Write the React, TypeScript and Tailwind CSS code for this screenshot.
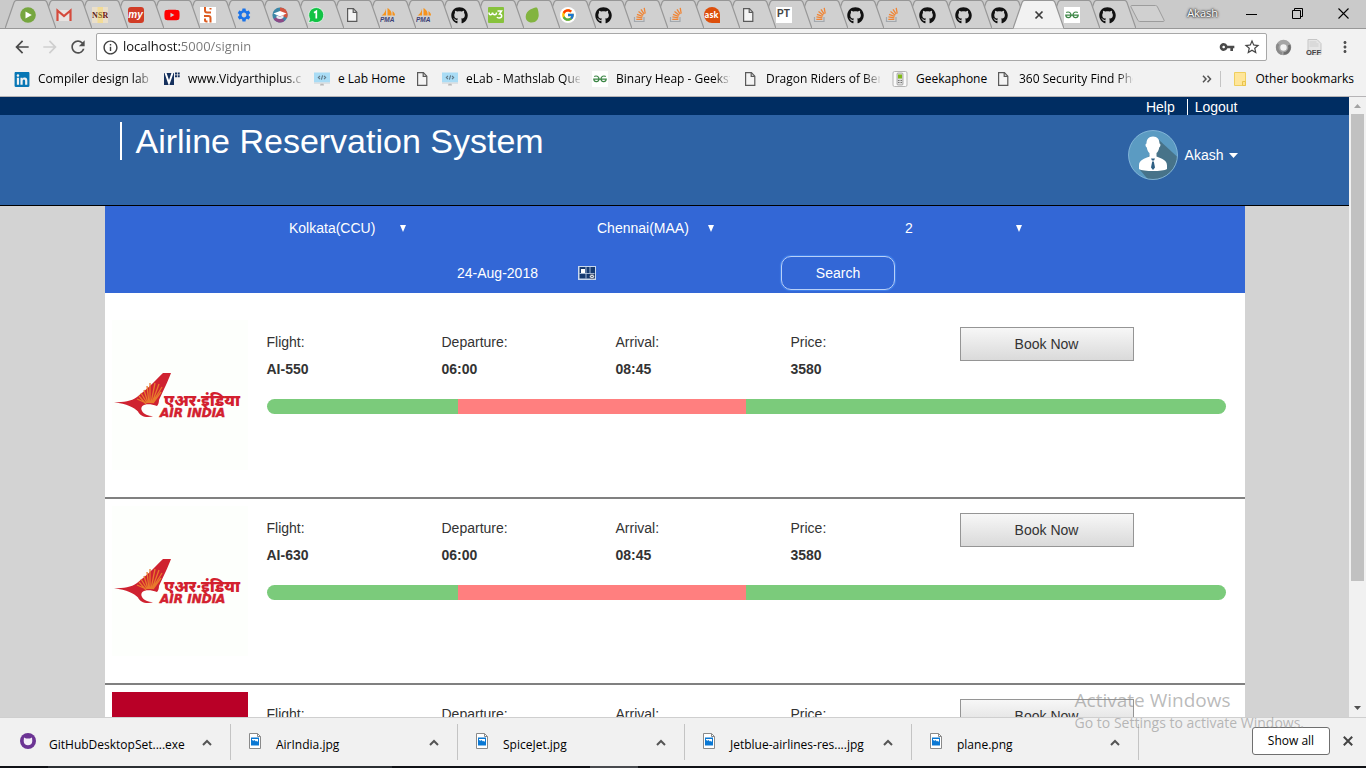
import React from 'react';
import { FaGithub, FaLinkedin, FaYoutube } from 'react-icons/fa';
import { FcGoogle } from 'react-icons/fc';
import {
  MdArrowBack,
  MdArrowForward,
  MdInfoOutline,
  MdMoreVert,
  MdRefresh,
  MdSettings,
  MdStarBorder,
  MdVpnKey,
} from 'react-icons/md';

const Page = () => (
  <svg width="16" height="16" viewBox="0 0 16 16" fill="#f4f4f4" stroke="#5a5a5a" strokeWidth="1.2">
    <path d="M3.6 1.6h5.8l3.4 3.6v9.2H3.6z" />
    <path d="M9.2 1.6v3.8h3.6" fill="none" />
  </svg>
);

const Play = () => (
  <svg width="16" height="16" viewBox="0 0 16 16">
    <circle cx="8" cy="8" r="7.8" fill="#76a63f" />
    <path d="M5.5 4.6 11.8 8l-6.3 3.4z" fill="#fff" />
  </svg>
);

const Gmail = () => (
  <svg width="16" height="16" viewBox="0 0 16 16">
    <path d="M2 3h12v11H2z" fill="#e8e4e2" />
    <path d="M1.500 14V3.500L8 9l6.500-5.500V14" fill="none" stroke="#d54b3d" strokeWidth="2.200" />
  </svg>
);

const Nsr = () => (
  <svg width="16" height="16" viewBox="0 0 16 16" fontFamily="Liberation Serif, serif" fontWeight="bold" fontSize="8">
    <rect width="16" height="16" fill="#eadfca" />
    <path d="M5.500 0h5.500v16H5.500z" fill="#f3dc96" />
    <text x="0" y="11" fill="#5a1c1c">N</text>
    <text x="6" y="11" fill="#8a6a2a">S</text>
    <text x="10.500" y="11" fill="#6b1515">R</text>
  </svg>
);

const My = () => (
  <span className="flex size-4 items-center justify-center rounded-[3px] bg-[#d13c26] pb-[2px] font-['Liberation_Sans',sans-serif] text-[10px] font-bold italic text-white">
    my
  </span>
);

const Unacademy = () => (
  <svg width="16" height="16" viewBox="0 0 16 16" fill="none" stroke="#dc5b20" strokeWidth="2">
    <rect width="16" height="16" fill="#fff" stroke="none" />
    <path d="M5 0V3.500Q5 5.500 7 5.500H11M10.500 1v1.500" />
    <path d="M4 9H8.500Q10.500 9 10.500 11V15.500M5 11.500V13Q5 14.500 6.500 14.500H7.500" />
  </svg>
);

const Scholar = () => (
  <svg width="16" height="16" viewBox="0 0 16 16">
    <circle cx="8" cy="8" r="7.600" fill="#3c86a6" />
    <path d="M8 .4a7.600 7.600 0 0 1 7 10.600L8 8z" fill="#d4553f" />
    <path d="M1.500 12a7.600 7.600 0 0 0 11 2L8 8z" fill="#8d4a86" />
    <path d="m1.500 6.500 6.500-2.500 6.500 2.500L8 9.500z" fill="#fff" />
    <path d="M4.500 8.500v2.500c2 1.500 5 1.500 7-.5V8L8 9.800z" fill="#e7eef2" />
  </svg>
);

const Whatsapp = () => (
  <svg width="16" height="16" viewBox="0 0 16 16">
    <path d="M.5 15.800 1.700 11.800A7.500 7.500 0 1 1 4.500 14.600z" fill="#12c245" stroke="#fff" strokeWidth=".7" />
    <path d="m6 5.800 2.300-1.500v7.200" fill="none" stroke="#fff" strokeWidth="1.700" />
  </svg>
);

const Pma = () => (
  <svg width="16" height="16" viewBox="0 0 16 16">
    <path d="M6 1.500v7H1.500C4 7 5.500 4.500 6 1.500zM7.500 1C11 3 12 6 11.500 8.500H7.500zM12.500 4c2 1.500 2.500 3 2.500 4.500h-2.500z" fill="#f6931d" />
    <text x="0" y="15" fontSize="6.500" fontWeight="bold" fontStyle="italic" fontFamily="Liberation Sans, sans-serif" fill="#3c4378">
      PMA
    </text>
  </svg>
);

const Github = () => <FaGithub size={17} color="#111" />;

const W3 = () => (
  <svg width="16" height="16" viewBox="0 0 16 16" fill="none" stroke="#fff" strokeWidth="1.500">
    <rect width="16" height="16" rx="1" fill="#87c23c" stroke="none" />
    <path d="M1 5.500c0 3 3 3 3.500 0 .5 3 4 3 4 0M9.500 4h4L11.500 7c3 0 3 4-.5 4-1 0-1.700-.4-2-1" />
  </svg>
);

const Leaf = () => (
  <svg width="16" height="16" viewBox="0 0 16 16">
    <path d="M12.600.5C10 .5 2 3 1.700 9.500c-.2 3.500 2.300 6 6 6 4.500 0 7-3.500 7-7.500 0-3-1-7.500-2.100-7.500z" fill="#82b440" />
  </svg>
);

const Google = () => (
  <span className="flex size-4 items-center justify-center rounded-full bg-white">
    <FcGoogle size={14} />
  </span>
);

const Stack = () => (
  <svg width="16" height="16" viewBox="0 0 16 16" fill="none">
    <path d="M2.500 10v4.500h9.500V10" stroke="#a3a8ad" strokeWidth="1.200" />
    <path d="M4.300 12.300h6M4.400 9.900l6 .9M5 7.300l5.600 2M6.500 4.600l4.800 3.600M9 2.300l3.200 4.900M12.200.9l1 5.600" stroke="#f08535" strokeWidth="1.300" />
  </svg>
);

const Ask = () => (
  <span className="flex size-4 items-center justify-center rounded-full rounded-br-none bg-[#dd4f0b] pb-px font-['Open_Sans',sans-serif] text-[8px] font-bold text-white">
    ask
  </span>
);

const Pt = () => (
  <span className="flex size-4 justify-center bg-white font-['Liberation_Sans',sans-serif] text-[10px] leading-[13px] font-bold text-[#444]">
    PT
  </span>
);

const Gfg = () => (
  <svg width="16" height="16" viewBox="0 0 16 16" fill="none" stroke="#3b8544" strokeWidth="1.200">
    <rect width="16" height="16" fill="#fff" stroke="none" />
    <path d="M2.200 5.500C4 4.500 7 5 7 8c0 3.200-5 3.500-5.200.2H14.200C14 11.500 9 11.200 9 8c0-3 3-3.500 4.800-2.500" />
  </svg>
);

const Vidyarthi = () => (
  <svg width="16" height="16" viewBox="0 0 16 16" fill="#16315d">
    <path d="M0 2h10v12H0z" />
    <path d="m1.500 2 3.500 10L8.500 2" fill="none" stroke="#fff" strokeWidth="2" />
    <path d="M11 1.500h2v2h-2zM13.700 1.500h2v2h-2zM11 4.200h2v2h-2zM13.700 4.200h2v2h-2z" />
  </svg>
);

const Elab = () => (
  <svg width="16" height="16" viewBox="0 0 16 16">
    <path d="M0 1.500h16v10H0z" fill="#a9dcf5" />
    <path d="M0 11.500h16v1.200H0z" fill="#d5d9dc" />
    <path d="M6.500 12.700h3l.5 1.800H6z" fill="#b8b8b8" />
    <path d="M6 4.800 4.300 6.500 6 8.200M10 4.800l1.700 1.700L10 8.200M8.600 4.300 7.400 8.700" fill="none" stroke="#5f7785" strokeWidth="1.100" />
  </svg>
);

const Phone = () => (
  <svg width="16" height="16" viewBox="0 0 16 16">
    <rect x="1" y=".5" width="14" height="15" rx="1.500" fill="#fafafa" stroke="#b5b5b5" />
    <rect x="5" y="2" width="6" height="12" rx="1" fill="#dedede" stroke="#909090" strokeWidth=".7" />
    <path d="M6 3.500h4v4H6z" fill="#80b918" />
    <path d="M6 9.500h4M6 11.500h4" stroke="#777" strokeDasharray="1 .5" />
  </svg>
);

const tabs: { title: string; icon: React.FC }[] = [
  { title: 'Play', icon: Play },
  { title: 'Gmail', icon: Gmail },
  { title: 'NSR', icon: Nsr },
  { title: 'my', icon: My },
  { title: 'YouTube', icon: () => <FaYoutube size={16} color="#f00" /> },
  { title: 'Courses', icon: Unacademy },
  { title: 'Settings', icon: () => <MdSettings size={16} color="#1a73e8" /> },
  { title: 'Scholar', icon: Scholar },
  { title: 'WhatsApp', icon: Whatsapp },
  { title: 'Page', icon: Page },
  { title: 'phpMyAdmin', icon: Pma },
  { title: 'phpMyAdmin', icon: Pma },
  { title: 'GitHub', icon: Github },
  { title: 'W3', icon: W3 },
  { title: 'Envato', icon: Leaf },
  { title: 'Google', icon: Google },
  { title: 'GitHub', icon: Github },
  { title: 'Stack Overflow', icon: Stack },
  { title: 'Stack Overflow', icon: Stack },
  { title: 'Ask', icon: Ask },
  { title: 'Page', icon: Page },
  { title: 'PT', icon: Pt },
  { title: 'Stack Overflow', icon: Stack },
  { title: 'GitHub', icon: Github },
  { title: 'Stack Overflow', icon: Stack },
  { title: 'GitHub', icon: Github },
  { title: 'GitHub', icon: Github },
  { title: 'GitHub', icon: Github },
  {
    title: 'Airline Reservation System',
    icon: () => (
      <svg width="16" height="16" viewBox="0 0 16 16" stroke="#3c3c3c" strokeWidth="1.700">
        <path d="m7.500 4.500 7 7M14.500 4.500l-7 7" />
      </svg>
    ),
  },
  { title: 'GeeksforGeeks', icon: Gfg },
  { title: 'GitHub', icon: Github },
];

const ACTIVE_TAB = 28;

function TabStrip() {
  return (
    <div className="flex h-[29px] items-stretch border-b border-[#989898] bg-[#cacaca] pl-[20px]">
      {tabs.map((tab, i) => {
        const active = i === ACTIVE_TAB;
        const Icon = tab.icon;
        return (
          <button
            key={i}
            type="button"
            aria-label={tab.title}
            className="-ml-[15px] grid h-[29px] w-[51px] shrink-0 grid-cols-1 grid-rows-1 items-center"
            style={{ zIndex: active ? 50 : 40 - i }}
          >
            <svg className="[grid-area:1/1]" width="51" height="29" viewBox="0 0 51 29">
              <path
                d="M0 28.500 9 2.500Q9.700 .5 11.500 .5H39.500Q41.300 .5 42 2.500L51 28.500"
                fill={active ? '#f2f2f2' : '#d0d0d0'}
                stroke="#979797"
                strokeWidth="1.200"
              />
              {!active && <path d="M0 28.500h51" stroke="#989898" />}
            </svg>
            <span className="flex w-[45px] justify-center pt-px [grid-area:1/1]">
              <Icon />
            </span>
          </button>
        );
      })}
      <button type="button" aria-label="New tab" className="-ml-[6px] flex items-center">
        <svg width="36" height="18" viewBox="0 0 36 18" fill="#d0d0d0" stroke="#9c9c9c">
          <path d="M2 .5h23.500c1 0 1.500.5 2 1.500l6.500 13c.5 1 0 1.500-1 1.500H10c-1 0-1.800-.5-2.300-1.500L1 2C.6 1 1 .5 2 .5z" />
        </svg>
      </button>
      <div className="ml-auto flex items-center">
        <span className="mr-[10px] pb-px font-['Open_Sans',sans-serif] text-[11px] text-white [text-shadow:0_0_2px_#333,0_0_2px_#333,0_0_3px_#555]">
          Akash
        </span>
        <button type="button" aria-label="Minimize" className="flex w-[46px] justify-center">
          <svg width="11" height="11" viewBox="0 0 11 11">
            <path d="M0 5.500h11" stroke="#000" />
          </svg>
        </button>
        <button type="button" aria-label="Restore" className="flex w-[46px] justify-center pb-[2px]">
          <svg width="11" height="11" viewBox="0 0 11 11" fill="none" stroke="#000">
            <path d="M.5 2.500h8v8h-8zM2.500 2.500v-2h8v8h-2" />
          </svg>
        </button>
        <button type="button" aria-label="Close" className="flex w-[46px] justify-center pb-[2px]">
          <svg width="11" height="11" viewBox="0 0 11 11" stroke="#000" strokeWidth="1.100">
            <path d="m.5.5 10 10M10.500.5l-10 10" />
          </svg>
        </button>
      </div>
    </div>
  );
}

function Toolbar() {
  return (
    <div className="flex h-[36px] items-center pr-3 pl-3">
      <button type="button" aria-label="Back" className="w-7">
        <MdArrowBack size={20} color="#4a4a4a" />
      </button>
      <button type="button" aria-label="Forward" className="w-7">
        <MdArrowForward size={20} color="#cfcfcf" />
      </button>
      <button type="button" aria-label="Reload" className="w-7">
        <MdRefresh size={20} color="#505050" />
      </button>
      <div className="flex h-[28px] flex-1 items-center rounded-[2px] border border-[#a8a8a8] bg-white pr-[5px] pl-[5px]">
        <MdInfoOutline size={17} color="#3f3f3f" />
        <input
          aria-label="Address"
          defaultValue="localhost:5000/signin"
          className="ml-1 flex-1 bg-[linear-gradient(90deg,#111_58px,#777_58px)] bg-clip-text font-['Open_Sans',sans-serif] text-[13px] text-transparent outline-none"
        />
        <button type="button" aria-label="Saved password" className="w-6">
          <MdVpnKey size={16} color="#4a4a4a" />
        </button>
        <button type="button" aria-label="Bookmark this page">
          <MdStarBorder size={18} color="#444" />
        </button>
      </div>
      <button type="button" aria-label="Sync" className="ml-2">
        <svg width="17" height="17" viewBox="0 0 17 17" fill="none">
          <circle cx="8.500" cy="8.500" r="5.500" stroke="#a5a5a5" strokeWidth="4.500" />
          <path d="M3.500 5a6 6 0 0 0 3.500 9.500" stroke="#8a8a8a" strokeWidth="2.500" />
          <path d="M14 6a6 6 0 0 1-5.500 8.500" stroke="#6e6e6e" strokeWidth="2.500" />
        </svg>
      </button>
      <button type="button" aria-label="Extension off" className="ml-[14px]">
        <svg width="16" height="17" viewBox="0 0 16 17">
          <path d="M2 .5h9l4 4v11H2z" fill="#e6e6e6" stroke="#c6c6c6" />
          <path d="M3.500 3h7M3.500 5h9M3.500 7h9" stroke="#cecece" />
          <text x="0" y="15.500" fontSize="7.500" fontWeight="bold" fontFamily="Liberation Sans, sans-serif" fill="#444">
            OFF
          </text>
        </svg>
      </button>
      <button type="button" aria-label="Menu" className="ml-[14px]">
        <MdMoreVert size={18} color="#505050" />
      </button>
    </div>
  );
}

const bookmarks: { label: string; icon: React.FC; width?: string }[] = [
  { label: 'Compiler design lab pro', icon: () => <FaLinkedin size={17} color="#0877b5" />, width: 'cut' },
  { label: 'www.Vidyarthiplus.com', icon: Vidyarthi, width: 'cut' },
  { label: 'e Lab Home', icon: Elab, width: 'w-16' },
  { label: '', icon: Page },
  { label: 'eLab - Mathslab Quest', icon: Elab, width: 'cut' },
  { label: 'Binary Heap - Geeksfor', icon: Gfg, width: 'cut' },
  { label: 'Dragon Riders of Berk', icon: Page, width: 'cut' },
  { label: 'Geekaphone', icon: Phone, width: 'w-[67px]' },
  { label: '360 Security Find Phone', icon: Page, width: 'cut' },
];

function BookmarksBar() {
  return (
    <nav className="flex h-8 items-center gap-3 border-b border-[#b6b4b6] pb-[3px] pl-[14px] font-['Open_Sans',sans-serif] text-[12px] whitespace-nowrap text-black">
      {bookmarks.map((b, i) => (
        <a key={i} href="#bookmark" aria-label={b.label || 'Page'} className="flex items-center gap-2">
          <span className="flex w-4 shrink-0 justify-center">
            <b.icon />
          </span>
          {b.label && (
            <span
              className={
                b.width === 'cut'
                  ? 'w-[114px] overflow-hidden [mask-image:linear-gradient(90deg,#000_98px,transparent_116px)]'
                  : b.width
              }
            >
              {b.label}
            </span>
          )}
        </a>
      ))}
      <button type="button" aria-label="More bookmarks" className="ml-auto">
        <svg width="10" height="8" viewBox="0 0 10 8" fill="none" stroke="#555" strokeWidth="1.500">
          <path d="m1 .8 3 3.200-3 3.200M5.500.8l3 3.200-3 3.200" />
        </svg>
      </button>
      <span className="-ml-1 h-4 w-px bg-[#c4c4c4]" />
      <a href="#other" className="mr-3 flex items-center gap-2">
        <svg width="14" height="16" viewBox="0 0 14 16">
          <path d="M1.500 1.500h11v13h-11z" fill="#ffe69a" stroke="#efcf5e" />
          <path d="M9.500 14.500v-4h3v4z" fill="#ffe18a" stroke="#e8c44c" />
        </svg>
        Other bookmarks
      </a>
    </nav>
  );
}

const Avatar = () => (
  <svg width="50" height="50" viewBox="0 0 50 50">
    <defs>
      <clipPath id="disc">
        <circle cx="25" cy="25" r="24.500" />
      </clipPath>
    </defs>
    <circle cx="25" cy="25" r="24.500" fill="#5b9bc2" />
    <g clipPath="url(#disc)">
      <path d="m31 10 24 22v22H24L12 40z" fill="#477389" />
    </g>
    <circle cx="25" cy="25" r="24.500" fill="none" stroke="#8fc0e0" strokeWidth=".8" />
    <path d="M25 6.500c4.500 0 6.500 3 6.500 7 1.300.2 1.300 3-.3 4-.5 3-1.500 4.500-2.700 5.500v3.500c5 2.500 10.500 3 10.500 9V39c-4 2.700-24 2.700-28 0v-3.500c0-6 5.500-6.500 10.500-9V23c-1.200-1-2.200-2.500-2.700-5.500-1.600-1-1.600-3.800-.3-4 0-4 2-7 6.500-7z" fill="#fff" />
    <path d="M23 28.500h4l-1 2h-2zM24.200 31.500h1.600L27 37.500l-2 2.500-2-2.500z" fill="#2e5f83" />
  </svg>
);

function Header() {
  return (
    <header className="border-b border-black bg-[#2e63a5] font-['Liberation_Sans',Arial,sans-serif] text-white">
      <div className="bg-[#002d62]">
        <div className="mx-auto flex h-[18px] max-w-[1140px] items-end justify-end pr-[7px] text-[14px] leading-4">
          <a href="#help" className="pr-3">Help</a>
          <a href="#logout" className="border-l border-white pl-[7px]">Logout</a>
        </div>
      </div>
      <div className="mx-auto flex h-[90px] max-w-[1140px] items-start justify-between pr-[7px] pl-[15px]">
        <h1 className="mt-[7px] border-l-2 border-white pl-[14px] text-[34px] leading-[38px]">
          Airline Reservation System
        </h1>
        <button type="button" className="mt-[15px] flex items-center text-[14px]">
          <Avatar />
          <span className="ml-[7px]">Akash</span>
          <svg className="ml-[5px]" width="9" height="5" viewBox="0 0 9 5">
            <path d="M0 0h9L4.500 5z" fill="#fff" />
          </svg>
        </button>
      </div>
    </header>
  );
}

function Picker({ label, value }: { label: string; value: string }) {
  return (
    <div className="grid w-[158px] grid-cols-1 items-center">
      <select
        aria-label={label}
        className="h-7 w-[130px] appearance-none bg-transparent text-white outline-none [grid-area:1/1]"
      >
        <option>{value}</option>
      </select>
      <svg className="pointer-events-none ml-[111px] [grid-area:1/1]" width="6" height="7" viewBox="0 0 6 7">
        <path d="M0 0h6L3 7z" fill="#fff" />
      </svg>
    </div>
  );
}

function SearchPanel() {
  return (
    <form className="bg-[#3367d6] pt-2 pb-[3px] pl-[3px] text-[14px] text-white">
      <div className="flex justify-center gap-[150px]">
        <Picker label="From" value="Kolkata(CCU)" />
        <Picker label="To" value="Chennai(MAA)" />
        <Picker label="Passengers" value="2" />
      </div>
      <div className="mt-[14px] flex items-center justify-center gap-[185px]">
        <div className="flex items-center">
          <input aria-label="Date" defaultValue="24-Aug-2018" className="w-[121px] bg-transparent outline-none" />
          <button type="button" aria-label="Open calendar">
            <svg width="18" height="14" viewBox="0 0 18 14">
              <rect width="18" height="14" fill="#c9d8ee" />
              <path d="M1.500 1h15.500v11.500H1.500z" fill="#163a70" />
              <path d="M3 3h4v4H3z" fill="#fff" />
              <path d="M8 1v11.500M12 1v6M1.500 7.500h15" stroke="#c3d3ea" strokeWidth=".8" />
              <circle cx="14" cy="10.500" r="2.300" fill="#e4ecf7" stroke="#556" strokeWidth=".7" />
              <circle cx="14" cy="10.500" r=".8" fill="#345" />
            </svg>
          </button>
        </div>
        <button
          type="button"
          className="h-[34px] w-[114px] rounded-[10px] border border-[#b8d0f8] shadow-[0_0_1px_1px_#4080ec]"
        >
          Search
        </button>
      </div>
    </form>
  );
}

const AirIndia = () => (
  <svg className="w-full" viewBox="0 0 136 150" role="img" aria-label="Air India">
    <rect width="136" height="150" fill="#fdfffc" />
    <path
      d="M2 82.500c10-.4 17-1 23-5.500 9-7 16-14 26-24h8c-3 8-7 16-12 27 0 3-1 5-2 6-10-4-18-1-15 5 2 3.500 6 4.500 11 5.500-8 1.500-13-.5-15-5-4-4-11-8-24-9z"
      fill="#cf2230"
    />
    <path
      d="m34 83-9-4M34 84l-7-8M35 83l-6-10M36 83l-4-13M37 83l-2-17M38 83V63M39 83l4-20M40 83l7-19M40 83l10-16M41 83l8-11"
      stroke="#e87a2c"
      strokeWidth="1.300"
      fill="none"
    />
    <text x="52" y="86" fontSize="16" fontWeight="900" fontStyle="italic" fontFamily="Noto Sans, sans-serif" fill="#d3202e">
      एअर·इंडिया
    </text>
    <text x="48" y="97" fontSize="12" fontWeight="bold" fontStyle="italic" fontFamily="DejaVu Sans, sans-serif" fill="#d3202e" stroke="#d3202e" strokeWidth=".5">
      AIR INDIA
    </text>
  </svg>
);

const SpiceJet = () => (
  <svg className="w-full" viewBox="0 0 136 150" role="img" aria-label="SpiceJet">
    <rect width="136" height="150" fill="#b90027" />
  </svg>
);

const Fact = ({ name, value }: { name: string; value: string }) => (
  <div className="pt-[2px]">
    <dt>{name}</dt>
    <dd className="font-bold">{value}</dd>
  </div>
);

const flights = [
  { no: 'AI-550', logo: AirIndia },
  { no: 'AI-630', logo: AirIndia },
  { no: 'SG-611', logo: SpiceJet },
];

function FlightRow({ no, logo: Logo }: { no: string; logo: React.FC }) {
  return (
    <li className="flex border-b-2 border-[#808080] pt-[7px] pr-[19px] pb-[27px] pl-[7px]">
      <div className="mr-[19px] h-[150px] w-[136px] shrink-0">
        <Logo />
      </div>
      <div className="flex-1 pt-[7px]">
        <dl className="grid grid-cols-[175fr_174fr_175fr_169fr_174fr_92fr] text-[14px] leading-[27px] text-[#333]">
          <Fact name="Flight:" value={no} />
          <Fact name="Departure:" value="06:00" />
          <Fact name="Arrival:" value="08:45" />
          <Fact name="Price:" value="3580" />
          <button
            type="button"
            className="h-[34px] border border-[#959595] bg-linear-to-b from-[#f7f7f7] to-[#dadada]"
          >
            Book Now
          </button>
        </dl>
        <div className="mt-4 flex h-[15px] overflow-hidden rounded-full bg-[#7bcb7b]">
          <div className="ml-[20%] w-[30%] bg-[#ff7f7f]" />
        </div>
      </div>
    </li>
  );
}

function Scrollbar() {
  return (
    <div className="flex w-[17px] shrink-0 flex-col items-center bg-[#f1f1f1]">
      <svg className="shrink-0" width="17" height="17" viewBox="0 0 17 17">
        <path d="M5 11h7L8.500 7z" fill="#a3a3a3" />
      </svg>
      <div className="h-[467px] w-[13px] bg-[#c1c1c1]" />
      <svg className="mt-auto shrink-0" width="17" height="17" viewBox="0 0 17 17">
        <path d="M5 6h7l-3.500 4z" fill="#505050" />
      </svg>
    </div>
  );
}

const ImageFile = () => (
  <svg width="16" height="16" viewBox="0 0 16 16">
    <path d="M2.500.5h8l3 3v12h-11z" fill="#fff" stroke="#8a8a8a" />
    <path d="M10.500.5v3h3" fill="none" stroke="#8a8a8a" />
    <path d="M4 4.500h8v8H4z" fill="#0a78d4" />
    <path d="M5 6h6v3L9.800 7.800 9 8.500 7.500 7l-1 .8L5 7z" fill="#fff" />
  </svg>
);

const Installer = () => (
  <svg width="16" height="16" viewBox="0 0 16 16">
    <circle cx="8" cy="8" r="8" fill="#6c3494" />
    <path d="M4 4.500 6 5.500h4l2-1 .3 3.500c0 3-2 4.200-4.300 4.200S3.700 11 3.700 8z" fill="#f4eef8" />
  </svg>
);

const downloads = [
  { name: 'GitHubDesktopSet....exe', icon: Installer },
  { name: 'AirIndia.jpg', icon: ImageFile },
  { name: 'SpiceJet.jpg', icon: ImageFile },
  { name: 'Jetblue-airlines-res....jpg', icon: ImageFile },
  { name: 'plane.png', icon: ImageFile },
];

function DownloadsBar() {
  return (
    <footer className="flex h-[49px] shrink-0 items-center border-t border-[#cfcfcf] bg-[#f1f1f1] pl-1 font-['Open_Sans',sans-serif] text-[12px] text-black">
      {downloads.map((d) => (
        <div key={d.name} className="flex h-9 w-[227px] shrink-0 items-center border-r border-[#c4c4c4] pl-4">
          <span className="pb-[2px]">
            <d.icon />
          </span>
          <span className="ml-[13px] pt-[5px]">{d.name}</span>
          <button type="button" aria-label={`Options for ${d.name}`} className="mr-[18px] ml-auto">
            <svg width="10" height="7" viewBox="0 0 10 7" fill="none" stroke="#555" strokeWidth="2">
              <path d="m1 6 4-4 4 4" />
            </svg>
          </button>
        </div>
      ))}
      <button type="button" className="mb-[2px] ml-auto h-[28px] w-[78px] rounded-[3px] border border-[#6f6f6f] bg-white">
        Show all
      </button>
      <button type="button" aria-label="Close downloads" className="mb-[2px] mr-[13px] ml-[13px]">
        <svg width="10" height="10" viewBox="0 0 10 10" stroke="#444" strokeWidth="2">
          <path d="m.8.8 8.400 8.400M9.200.8.8 9.200" />
        </svg>
      </button>
    </footer>
  );
}

export default function App() {
  return (
    <div className="relative flex h-screen flex-col overflow-hidden bg-[#f2f2f2]">
      <TabStrip />
      <Toolbar />
      <BookmarksBar />
      <div className="flex min-h-0 flex-1">
        <main className="min-w-0 flex-1 overflow-hidden bg-[#d3d3d3]">
          <Header />
          <div className="mx-auto max-w-[1140px] bg-white font-['Liberation_Sans',Arial,sans-serif]">
            <SearchPanel />
            <ul className="pt-5">
              {flights.map((f) => (
                <FlightRow key={f.no} {...f} />
              ))}
            </ul>
          </div>
        </main>
        <Scrollbar />
      </div>
      <DownloadsBar />
      <div className="flex h-[2px] shrink-0 bg-[#2b2f33]">
        <div className="w-12 bg-[#101216]" />
        <div className="ml-[344px] flex-1 bg-[#101216] pl-[198px]">
          <div className="h-full w-12 bg-[#484a4e]" />
        </div>
      </div>
      <div className="pointer-events-none absolute right-[62px] bottom-[34px] z-50 font-['Open_Sans',sans-serif] text-[#8c8c8c]/60">
        <p className="text-[19px] leading-6">Activate Windows</p>
        <p className="text-[14px] leading-[22px]">Go to Settings to activate Windows.</p>
      </div>
    </div>
  );
}
